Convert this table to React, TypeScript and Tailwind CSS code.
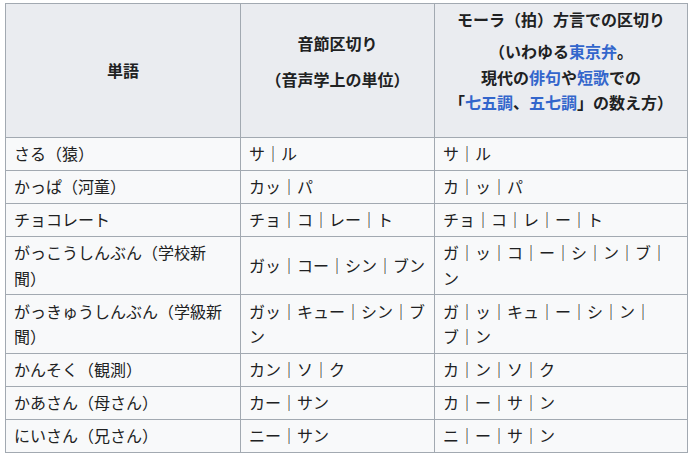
const rows: [string, string, string][] = [
  ['さる（猿）', 'サ｜ル', 'サ｜ル'],
  ['かっぱ（河童）', 'カッ｜パ', 'カ｜ッ｜パ'],
  ['チョコレート', 'チョ｜コ｜レー｜ト', 'チョ｜コ｜レ｜ー｜ト'],
  ['がっこうしんぶん（学校新聞）', 'ガッ｜コー｜シン｜ブン', 'ガ｜ッ｜コ｜ー｜シ｜ン｜ブ｜\nン'],
  ['がっきゅうしんぶん（学級新聞）', 'ガッ｜キュー｜シン｜ブ\nン', 'ガ｜ッ｜キュ｜ー｜シ｜ン｜\nブ｜ン'],
  ['かんそく（観測）', 'カン｜ソ｜ク', 'カ｜ン｜ソ｜ク'],
  ['かあさん（母さん）', 'カー｜サン', 'カ｜ー｜サ｜ン'],
  ['にいさん（兄さん）', 'ニー｜サン', 'ニ｜ー｜サ｜ン'],
];

function Link({children}: {children: string}) {
  return <a className="text-[#3366cc]">{children}</a>;
}

export default function App() {
  return (
    <div className="min-h-[459px] bg-white pl-[5px] pt-[3px] font-['Noto_Sans_CJK_JP',sans-serif] text-[16px] text-[#202122] [text-spacing-trim:space-all]">
      <table className="w-[682px] table-fixed border-collapse border border-[#a2a9b1] bg-[#f8f9fa]">
        <colgroup>
          <col className="w-[235px]" />
          <col className="w-[194px]" />
          <col className="w-[253px]" />
        </colgroup>
        <thead>
          <tr className="bg-[#eaecf0]">
            <th className="border border-[#a2a9b1] px-2 py-[3.2px] text-center align-middle font-bold leading-[25.6px]">単語</th>
            <th className="border border-[#a2a9b1] px-2 py-[3.2px] text-center align-middle font-bold leading-[25.6px]">
              <div>音節区切り</div>
              <div className="mb-[17px] mt-[11px]">（音声学上の単位）</div>
            </th>
            <th className="border border-[#a2a9b1] px-2 pb-[21px] pt-[3.2px] text-center align-middle font-bold leading-[25.6px]">
              <div>モーラ（拍）方言での区切り</div>
              <p className="mt-[6.4px]">
                （いわゆる<Link>東京弁</Link>。
                <br />
                現代の<Link>俳句</Link>や<Link>短歌</Link>での
                <br />
                「<Link>七五調</Link>、<Link>五七調</Link>」の数え方）
              </p>
            </th>
          </tr>
        </thead>
        <tbody>
          {rows.map(([word, syllable, mora]) => (
            <tr key={word}>
              <td className="border border-[#a2a9b1] px-2 py-[3.2px] align-middle leading-[25.6px]">{word}</td>
              <td className="whitespace-pre-line border border-[#a2a9b1] px-2 py-[3.2px] align-middle leading-[25.6px]">{syllable}</td>
              <td className="whitespace-pre-line border border-[#a2a9b1] px-2 py-[3.2px] align-middle leading-[25.6px]">{mora}</td>
            </tr>
          ))}
        </tbody>
      </table>
    </div>
  );
}
